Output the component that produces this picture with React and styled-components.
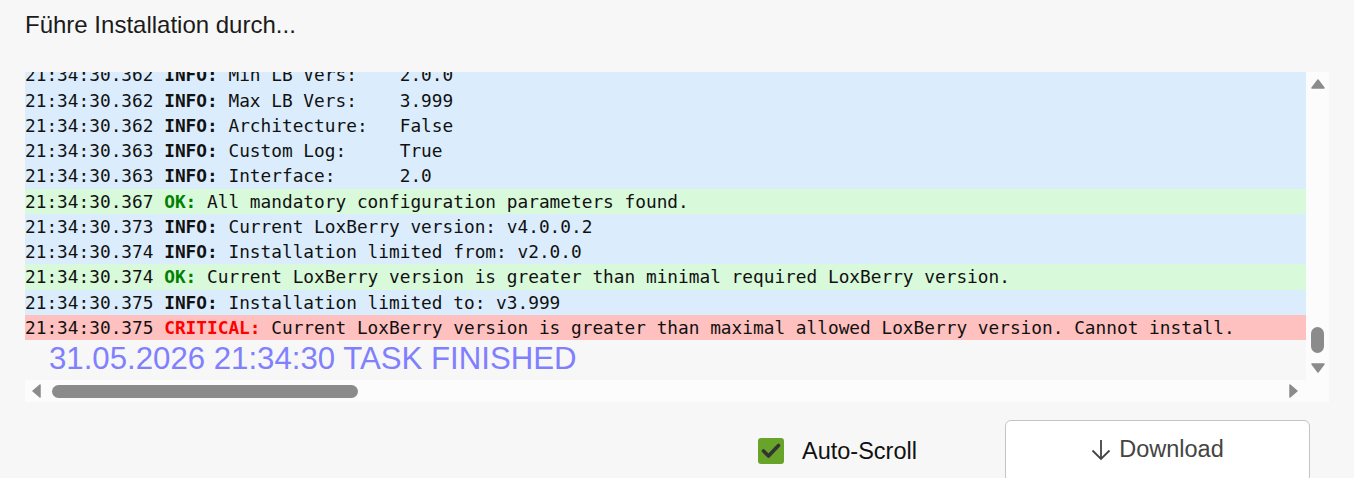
import React from 'react';
import styled, { createGlobalStyle } from 'styled-components';

const GlobalStyle = createGlobalStyle`
  html, body {
    margin: 0;
    padding: 0;
    background: #f7f7f7;
    overflow: hidden;
  }
`;

const Page = styled.div`
  display: flex;
  flex-direction: column;
  padding: 11px 25px 0 25px;
  font-family: "Liberation Sans", Arial, sans-serif;
`;

const Title = styled.div`
  font-size: 24px;
  line-height: 28px;
  color: #1b1b1b;
`;

const LogBox = styled.div`
  margin-top: 33px;
  width: 1304px;
  display: grid;
  grid-template-columns: 1fr 23px;
  grid-template-rows: 308px 22px;
  background: #fcfcfc;
`;

const Viewport = styled.div`
  display: flex;
  flex-direction: column;
  justify-content: flex-end;
  overflow: hidden;
  background: #f7f7f7;
`;

const Row = styled.div`
  flex: none;
  height: 25.25px;
  line-height: 25.25px;
  white-space: pre;
  font-family: "DejaVu Sans Mono", "Liberation Mono", monospace;
  font-size: 17.8px;
  color: #111;
  background: ${p => p.$kind === 'ok' ? '#d8f9da' : p.$kind === 'crit' ? '#ffc0c0' : '#dbedfd'};
`;

const Level = styled.b`
  color: ${p => p.$kind === 'ok' ? '#008000' : p.$kind === 'crit' ? '#ff0000' : '#111'};
`;

const Finished = styled.div`
  flex: none;
  padding: 0 0 2px 24px;
  font-size: 31.2px;
  line-height: 38px;
  color: #8080ff;
  white-space: nowrap;
`;

const VBar = styled.div`
  display: flex;
  flex-direction: column;
  align-items: center;
  padding: 6px 0;
`;

const VTrack = styled.div`
  flex: 1;
  display: flex;
  flex-direction: column;
  justify-content: flex-end;
  padding-bottom: 10px;
`;

const VThumb = styled.div`
  width: 13px;
  height: 26px;
  border-radius: 7px;
  background: #8b8b8b;
`;

const HBar = styled.div`
  display: flex;
  align-items: center;
  padding: 0 7px 0 6px;
`;

const HThumb = styled.div`
  margin-left: 11px;
  width: 306px;
  height: 13px;
  border-radius: 7px;
  background: #8b8b8b;
`;

const Spacer = styled.div`
  flex: 1;
`;

const Footer = styled.div`
  margin-top: 18px;
  width: 1285px;
  display: flex;
  justify-content: flex-end;
  align-items: center;
`;

const CheckLabel = styled.label`
  width: 247px;
  display: flex;
  align-items: center;
  gap: 18px;
  font-size: 23.5px;
  color: #111;
`;

const CheckBox = styled.span`
  width: 26px;
  height: 26px;
  border-radius: 3px;
  background: #69a42a;
  display: flex;
  align-items: center;
  justify-content: center;
`;

const Button = styled.button`
  width: 305px;
  height: 62px;
  flex: none;
  display: flex;
  align-items: center;
  justify-content: center;
  gap: 8px;
  background: #fff;
  border: 1px solid #c4c4c4;
  border-radius: 6px;
  font-family: "Liberation Sans", Arial, sans-serif;
  font-size: 23.5px;
  color: #444;
  padding: 0 0 3px 0;
`;

const Arrow = ({ dir }) => {
  const pts = {
    up: '1,10 7,2 13,10',
    down: '1,1 7,9 13,1',
    left: '9,1 2,7 9,13',
    right: '1,1 8,7 1,13',
  }[dir];
  const vert = dir === 'up' || dir === 'down';
  return (
    <svg width={vert ? 14 : 10} height={vert ? 11 : 14} viewBox={vert ? '0 0 14 11' : '0 0 10 14'}>
      <polygon points={pts} fill="#8b8b8b" stroke="#8b8b8b" strokeWidth="1.5" strokeLinejoin="round" />
    </svg>
  );
};

// only the tail of the log is visible, the first row is cut by the viewport
const lines = [
  ['21:34:30.362', 'info', 'INFO:', ' Min LB Vers:    2.0.0'],
  ['21:34:30.362', 'info', 'INFO:', ' Max LB Vers:    3.999'],
  ['21:34:30.362', 'info', 'INFO:', ' Architecture:   False'],
  ['21:34:30.363', 'info', 'INFO:', ' Custom Log:     True'],
  ['21:34:30.363', 'info', 'INFO:', ' Interface:      2.0'],
  ['21:34:30.367', 'ok', 'OK:', ' All mandatory configuration parameters found.'],
  ['21:34:30.373', 'info', 'INFO:', ' Current LoxBerry version: v4.0.0.2'],
  ['21:34:30.374', 'info', 'INFO:', ' Installation limited from: v2.0.0'],
  ['21:34:30.374', 'ok', 'OK:', ' Current LoxBerry version is greater than minimal required LoxBerry version.'],
  ['21:34:30.375', 'info', 'INFO:', ' Installation limited to: v3.999'],
  ['21:34:30.375', 'crit', 'CRITICAL:', ' Current LoxBerry version is greater than maximal allowed LoxBerry version. Cannot install.'],
];

const App = () => {
  return (
    <Page>
      <GlobalStyle />
      <Title>Führe Installation durch...</Title>
      <LogBox>
        <Viewport>
          {lines.map(([time, kind, level, msg], i) => (
            <Row key={i} $kind={kind}>
              {time} <Level $kind={kind}>{level}</Level>{msg}
            </Row>
          ))}
          <Finished>31.05.2026 21:34:30 TASK FINISHED</Finished>
        </Viewport>
        <VBar>
          <Arrow dir="up" />
          <VTrack>
            <VThumb />
          </VTrack>
          <Arrow dir="down" />
        </VBar>
        <HBar>
          <Arrow dir="left" />
          <HThumb />
          <Spacer />
          <Arrow dir="right" />
        </HBar>
        <div />
      </LogBox>
      <Footer>
        <CheckLabel>
          <CheckBox>
            <svg width="20" height="16" viewBox="0 0 20 16">
              <polyline points="2.5,8 7.5,13 17.5,2.5" fill="none" stroke="#333" strokeWidth="3.6" strokeLinecap="round" strokeLinejoin="round" />
            </svg>
          </CheckBox>
          Auto-Scroll
        </CheckLabel>
        <Button>
          <svg width="20" height="22" viewBox="0 0 20 22">
            <path d="M10 1v19M1.5 11.5L10 20l8.5-8.5" fill="none" stroke="#444" strokeWidth="1.8" />
          </svg>
          Download
        </Button>
      </Footer>
    </Page>
  );
};

export default App;
